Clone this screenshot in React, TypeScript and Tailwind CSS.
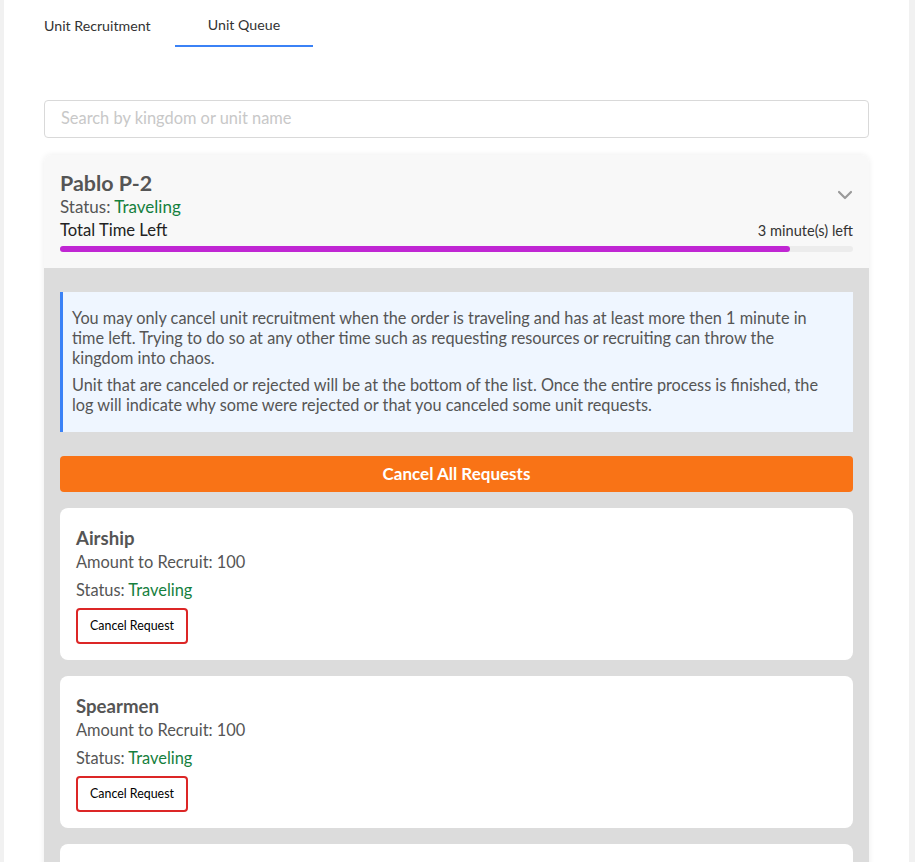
import React from "react";

const font = { fontFamily: "Lato, 'Noto Sans', sans-serif" };

function UnitCard({ name }: { name: string }) {
  return (
    <div className="bg-white rounded-lg px-4 pt-[18px] pb-4 flex flex-col">
      <div className="text-[18.6px] font-bold text-[#555] leading-[24px]">{name}</div>
      <div className="text-[16.4px] text-[#555] leading-[24px]">Amount to Recruit: 100</div>
      <div className="text-[16.4px] text-[#555] leading-[24px] mt-1">
        Status: <span className="text-[#15803d]">Traveling</span>
      </div>
      <div className="mt-[6px]">
        <button className="border-2 border-[#dc2626] rounded-sm h-9 w-[112px] text-[12.4px] text-black bg-white">
          Cancel Request
        </button>
      </div>
    </div>
  );
}

export default function App() {
  return (
    <div className="h-[862px] overflow-hidden bg-[#f1f1f1] px-1" style={font}>
      <div className="bg-white min-h-[862px] w-[905px] px-10">
        {/* Tabs */}
        <div className="flex pt-[15px]">
          <div className="w-[131px] flex flex-col">
            <div className="h-[20px] leading-[20px] text-[14.2px] text-[#333] mt-[1px]">Unit Recruitment</div>
          </div>
          <div className="w-[138px] flex flex-col">
            <div className="h-[20px] leading-[20px] text-[14.2px] text-[#333] text-center">Unit Queue</div>
            <div className="mt-[10px] h-[2px] bg-[#3b82f6]" />
          </div>
        </div>

        {/* Search */}
        <div className="mt-[53px]">
          <input
            className="w-full h-[38px] border border-[#d9d9d9] rounded px-4 pb-[3px] text-[16.4px] placeholder-[#c8c8c8] outline-none"
            placeholder="Search by kingdom or unit name"
          />
        </div>

        {/* Accordion */}
        <div className="mt-[17px] rounded-lg shadow-[0_0_6px_rgba(0,0,0,0.08)] overflow-hidden">
          <div className="bg-[#f8f8f8] px-4 pt-[15px] pb-4">
            <div className="flex items-start justify-between">
              <div>
                <div className="text-[21.4px] font-bold text-[#555] leading-[26px]">Pablo P-2</div>
                <div className="text-[17px] text-[#555] leading-[22px]">
                  Status: <span className="text-[#15803d]">Traveling</span>
                </div>
              </div>
              <svg className="mt-[20px]" width="16" height="10" viewBox="0 0 16 10" fill="none">
                <path d="M2 2l6 6 6-6" stroke="#9a9a9a" strokeWidth="2.2" strokeLinecap="round" strokeLinejoin="round" />
              </svg>
            </div>
            <div className="flex items-end justify-between mt-[1px]">
              <div className="text-[16.6px] text-[#222] leading-[22px]">Total Time Left</div>
              <div className="text-[14.6px] text-[#333] leading-[20px]">3 minute(s) left</div>
            </div>
            <div className="mt-[5px] h-[6px] bg-[#ececec] rounded-full">
              <div className="h-full bg-[#c026d3] rounded-full" style={{ width: "92%" }} />
            </div>
          </div>
          <div className="bg-[#dcdcdc] px-4 pt-6 pb-4 flex flex-col">
            <div className="bg-[#eff6ff] border-l-[3px] border-[#3b82f6] pl-[9px] pr-5 pt-[16px] pb-[17px] text-[16.3px] text-[#555] leading-[20px]">
              <p>
                You may only cancel unit recruitment when the order is traveling and has at least more then 1 minute in
                time left. Trying to do so at any other time such as requesting resources or recruiting can throw the
                kingdom into chaos.
              </p>
              <p className="mt-[7px]">
                Unit that are canceled or rejected will be at the bottom of the list. Once the entire process is finished,
                the log will indicate why some were rejected or that you canceled some unit requests.
              </p>
            </div>
            <button className="mt-6 h-9 bg-[#f97316] rounded-sm text-white font-bold text-[17px]">
              Cancel All Requests
            </button>
            <div className="mt-4 flex flex-col gap-4">
              <UnitCard name="Airship" />
              <UnitCard name="Spearmen" />
              <div className="bg-white rounded-lg h-[152px]" />
            </div>
          </div>
        </div>
      </div>
    </div>
  );
}
